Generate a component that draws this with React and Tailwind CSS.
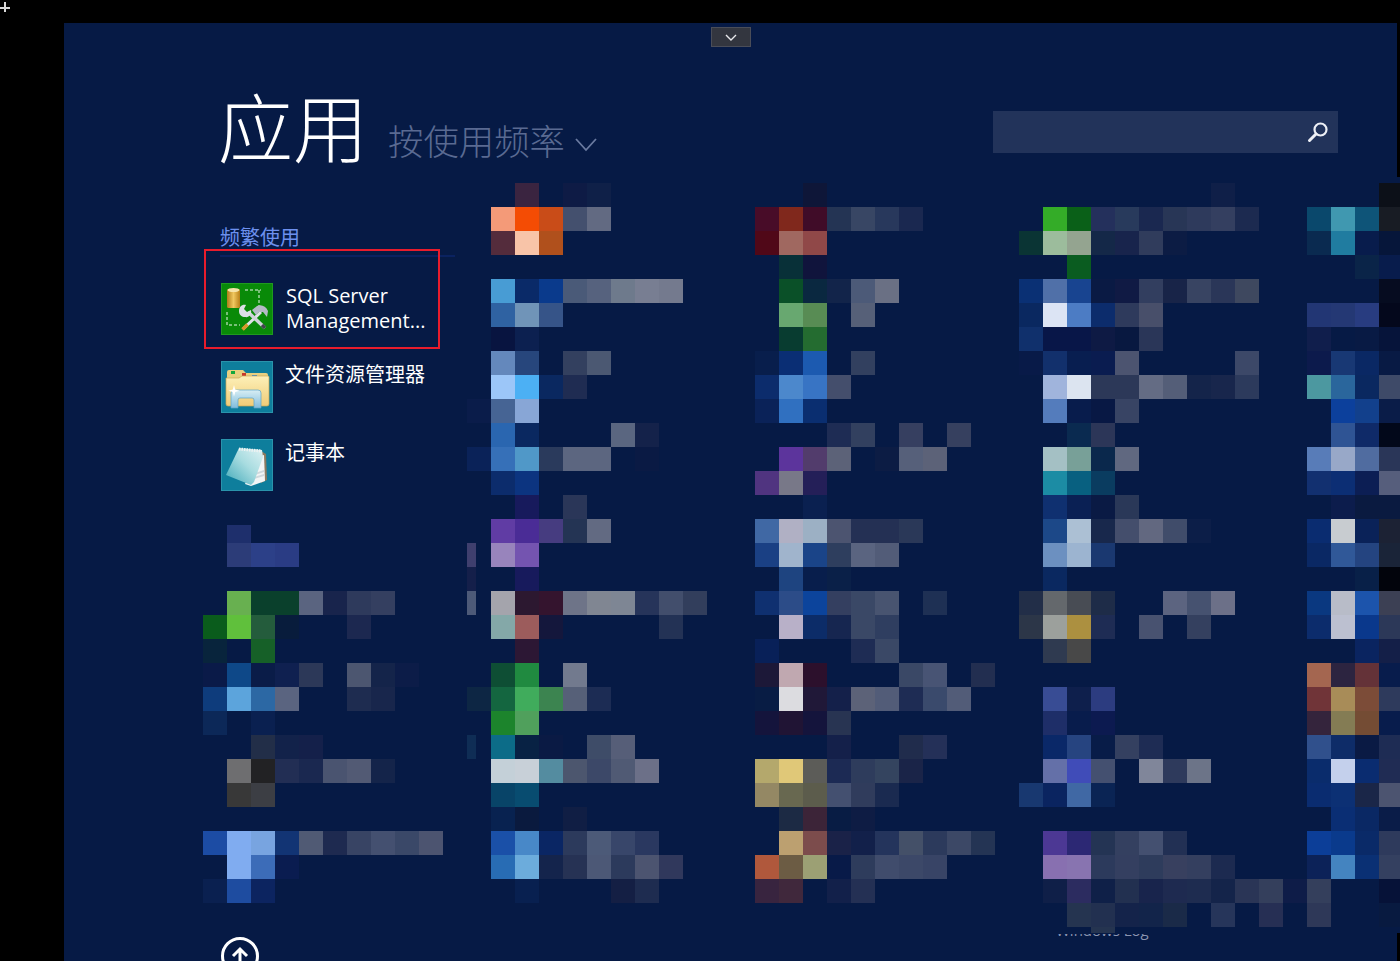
import React from "react";

// mosaic rows, one string per row: "col:hex col:hex ..."
const mosaic = [
  "13:3a2440 15:0e1b45 16:0f2048 25:0e1638 42:0f1f48 49:0c1018",
  "12:f49a78 13:f44c04 14:c94c18 15:44506e 16:626a82 23:480c28 24:80281c 25:400c28 26:243454 27:384664 28:28385c 29:1a2850 35:34ac28 36:0a6018 37:24305c 38:283a5c 39:1a2850 40:283656 41:2e3a5c 42:343f60 43:1c2a50 46:0a486c 47:4098b0 48:0e5478 49:181c24",
  "12:542c3c 13:f8c4a8 14:b0501c 23:500818 24:a06860 25:904848 34:0a3434 35:9cbc9c 36:94a490 37:142848 38:18244c 39:303c5c 40:0c1c44 46:0a2a50 47:207ca0 48:081c4c 49:06163a",
  "24:083038 25:10143c 36:0a5c20 48:0a2448 49:081c4c",
  "12:489cd4 13:0a2a68 14:0a3a8c 15:4a5a78 16:56627e 17:6e7a8c 18:787e92 19:747a8e 24:0a5028 25:0a2840 26:12244a 27:4c5a78 28:6a7084 34:0a3074 35:5070a8 36:184490 37:0a1a44 38:101a44 39:323e5f 40:182448 41:384462 42:2a3658 43:3e485f 49:060c20",
  "12:2f62a2 13:7094b8 14:365488 24:68a870 25:588c54 27:566078 34:0a2860 35:dce4f4 36:4c7cc4 37:0c2c6c 38:2e3a5c 39:484f6a 46:223674 47:243874 48:283c80 49:04081c",
  "12:081440 13:0c2050 24:083c30 25:246c30 34:10306c 35:081648 36:081648 37:0e1a44 38:081840 39:2a3658 46:101e4c 48:081a44 49:06143a",
  "12:6488bc 13:27467c 15:33405f 16:4b5872 23:081e4c 24:0a2e74 25:1c5ab0 27:32405f 34:081a48 35:12306c 36:081e50 37:0a1c50 38:4c5470 43:3c4868 46:0c1a4c 47:183874 48:0a2864 49:081a44",
  "12:9cc6f8 13:4cb0f4 14:0a2860 15:1f2c52 23:0c2c6c 24:4c88cc 25:3874c4 26:444e6c 35:a0b4dc 36:dce4f0 37:2c3858 38:2c3858 39:646c84 40:545e78 41:14244a 42:18264c 43:2c3a5c 46:4c98a0 47:2a669c 48:0a2860 49:3e4a68",
  "11:0a1c4a 12:466494 13:88a6d6 23:0a2258 24:3070c0 25:0a2e70 35:547cbc 36:081c4c 37:081844 38:384464 47:0c409c 48:12408c 49:0a1c48",
  "12:2a66b0 13:0a2860 17:5a6680 18:14224a 26:1e2c54 27:32405f 29:363f60 31:36405f 36:0a2a50 37:2c3658 47:2f5494 48:0f2a68 49:02081a",
  "11:0a2258 12:3670b8 13:5098c8 14:2a3a5c 15:5c6680 16:5c6680 18:0a1a44 24:5c349c 25:523c6c 26:5c6278 28:0c1c44 29:56607a 30:5c6278 35:a4c0c4 36:78a098 37:0a284c 38:606880 46:587cb8 47:98a8c8 48:506ca0 49:2a3658",
  "12:0c2c6c 13:0c3480 23:503480 24:787888 25:241f58 35:1c8ca4 36:086080 37:0a3c60 46:123070 47:0c2e74 48:0c1e54 49:565e7c",
  "13:171a5c 15:2a3658 25:0a2050 35:0f3070 36:0a2054 37:0a1a44 38:2a3858 47:0c1c4c 48:0a1a40 49:0a1a40",
  "12:603ca4 13:4a2c96 14:463c80 15:243454 16:626a82 23:4068a4 24:b0b0c4 25:9cb0c4 26:4c5470 27:243054 28:243054 29:2a3858 35:1c4888 36:acc0d4 37:18284c 38:444e6c 39:626880 40:404c6a 41:0c1e48 46:0a2c70 47:c8ccd0 48:0a2258 49:1c2234",
  "1:2c3c78 2:2c4088 3:2a3c84 12:9884bc 13:7454b0 23:1a4084 24:a0b4cc 25:1a4488 26:2e3e5e 27:5a6480 28:525c78 35:6c90c0 36:9cb4d0 37:1a3870 46:0a2864 47:305898 48:244480 49:1a2438",
  "13:171a5c 24:1e4480 25:081e4c 26:0a2048 35:0a2860 48:082048 49:02040c",
  "1:68b050 2:0a402c 3:0a402c 4:5a6480 5:18244c 6:2e3a5c 7:343f60 12:a4a4ac 13:2c1830 14:34142e 15:6e7488 16:808692 17:7e8694 18:26345a 19:424e6c 20:323e5c 23:0f3070 24:2c4c88 25:0c449c 26:343f60 27:3a4866 28:485470 30:1e3054 34:222e48 35:64686c 36:484c54 37:1e2c48 40:5c6480 41:465270 42:6c7088 46:0a3880 47:b8bcc8 48:1c54ac 49:3c4054",
  "0:0a5c1c 1:60c03c 2:245c3c 3:081c3c 6:1c2850 12:84a8a8 13:9c5c5c 14:14173c 19:233255 24:b8b0c8 25:0c2c68 26:162650 27:3a4866 28:2f3e60 34:2c3648 35:9ca09c 36:ac9040 37:1e2c54 39:485270 41:34405f 46:0c2c6c 47:bcc0d0 48:0a388c 49:2c3858",
  "0:08243c 2:166028 13:2c1734 23:082058 27:1e2c54 28:3a4866 35:2f3a50 36:484848 48:0a2460 49:141f48",
  "0:0a1a48 1:0e4888 2:0a1c48 3:0f2050 4:2c3858 6:4c5670 7:14244a 8:0c1c48 12:0e4e34 13:208a40 15:727a8e 23:1c1838 24:c0a8b0 25:2c102c 29:3a4866 30:485474 32:222e50 46:a46650 47:2c2440 48:643238 49:081c4c",
  "0:0e3c7c 1:5ca4dc 2:2c68a4 3:5a6480 6:1e2c50 7:18264c 11:0d2644 12:146640 13:40ac5c 14:3c8450 15:566078 16:1c2c54 23:081c44 24:dcdce0 25:201838 26:14204a 27:5c6278 28:525c78 29:1e2c54 30:3a4a6c 31:525c78 35:384c94 36:0e1f4c 37:2c3c80 46:703438 47:a88c58 48:7c4c38 49:2e3a5c",
  "0:0c2858 2:0a2050 12:1c842c 13:50a05c 23:14143c 24:201434 25:14143c 26:283452 35:1e2e68 36:081c4c 37:0c1a50 46:34243c 47:847c54 48:744c34 49:081c4c",
  "2:222e48 3:12224a 4:14204a 12:0c6c88 13:082244 14:0a1a44 16:3e4c68 17:565e78 26:14204a 29:202c4c 30:243058 35:0a2868 36:264480 37:081c48 38:344060 39:1e2c54 46:30508c 47:0e2c68 48:0a1a44 49:1e2c54",
  "1:6e6e70 2:222224 3:222e54 4:1a2850 5:4a5470 6:525a74 7:14244a 12:c4d0d8 13:c8d0d8 14:548ca0 15:4c566e 16:3c4868 17:505a74 18:6c7088 23:b4a86c 24:e0c878 25:5c5c58 26:1c2a54 27:2e3c5c 28:34445f 29:1a2448 35:6470a8 36:404cb8 37:445070 39:80869a 40:2e3a5c 41:6c7488 46:0a2c6c 47:c4d0ec 48:0a2c70 49:202c54",
  "1:383838 2:3c3e44 12:084468 13:084c70 23:948864 24:686850 25:5c5c4c 26:445070 27:303c5c 28:1a2a50 34:183870 35:0a2460 36:4068a4 37:0a2454 46:0a2c70 47:0c3074 48:1a2648 49:4c5470",
  "12:082250 13:0a1a3e 15:101e44 24:1c2a44 25:3c2438 26:081c44 27:0e1c44 47:0a2e74 48:0a2864 49:0a1c48",
  "0:1c4ca4 1:80acf0 2:78a4e0 3:123474 4:505a74 5:1e2a50 6:384464 7:445070 8:3a4868 9:4c5470 12:1a50a8 13:4888c8 14:0a2664 15:2c3a5c 16:4c5a78 17:38466a 18:2a3860 24:bca070 25:7c4c4c 26:1a2248 27:12204a 28:24345c 29:445068 30:2c3a5c 31:3c4866 32:243454 35:4c3894 36:2c2874 37:243454 38:344060 39:445070 40:223054 46:0c3e98 47:0a3a8c 48:0a2a68 49:2e3a5c",
  "1:80acf0 2:3c6cb8 3:0a1c50 12:286cb4 13:6cacdc 14:14244c 15:263254 16:4c5876 17:2c3a5c 18:4c5470 19:30385c 23:b0583c 24:6c5c44 25:9ca074 26:081a48 27:2e3c5c 28:404c6c 29:3c4868 30:384466 35:8870b0 36:8874b0 37:2c3a5c 38:343f60 39:2e3c5c 40:38405f 41:343f5f 42:1c2a50 46:0c2258 47:4484c0 48:0a3074 49:344060",
  "0:0a2050 1:1e4ca0 2:0c2460 13:082050 17:141f44 18:1e2c50 23:38243f 24:40283c 26:12204a 27:243054 35:0f1f48 36:2c2c60 37:0f2048 38:223050 39:18244c 40:1e2a50 41:1e2c50 42:14244a 43:2a3556 44:343f5c 45:0e1c48 46:343f5c 49:061238",
  "36:253450 37:223050 38:14234a 39:12244a 40:1a2a48 42:26355a 44:262f54 46:2e3858 49:081a40",
];

const cells = mosaic.flatMap((row, r) =>
  row.split(" ").map((cell) => {
    const [c, hex] = cell.split(":");
    return { r: r + 1, c: Number(c) + 1, hex };
  })
);

const SqlIcon = () => (
  <svg width="52" height="52" viewBox="0 0 52 52" className="shrink-0">
    <defs>
      <linearGradient id="can" x1="0" x2="1" y1="0" y2="0">
        <stop offset="0" stopColor="#b07c18" />
        <stop offset="0.5" stopColor="#f0c860" />
        <stop offset="1" stopColor="#b88018" />
      </linearGradient>
    </defs>
    <rect x="0.5" y="0.5" width="51" height="51" fill="#098a08" stroke="#1f9a1f" />
    <rect x="6" y="6" width="13" height="19" rx="1.5" fill="url(#can)" />
    <ellipse cx="12.5" cy="7" rx="6" ry="2" fill="#f6e4a8" />
    <path d="M24 7h16M38 7v17M6 29v13h13" stroke="#78c078" strokeWidth="2" strokeDasharray="3 2" fill="none" />
    {/* hammer */}
    <path d="M22 46L40 29" stroke="#dfe2e6" strokeWidth="3" />
    <path d="M21.5 46.5l5-5" stroke="#d8982c" strokeWidth="3.5" />
    <path d="M31 27l5-4c4-2 9 0 11 5l-1 6-4-5-4 0-3 3z" fill="#b4bac6" />
    {/* wrench */}
    <path d="M27 29L44 45" stroke="#cfd3da" strokeWidth="3.5" />
    <path d="M44 45l-3-3" stroke="#40464c" strokeWidth="3.5" />
    <path d="M18 28c0-4 3-7 7-6l-2 4 3 3 4-2c1 4-2 8-6 7-3 0-6-2-6-6z" fill="#dde0e6" />
  </svg>
);

const FolderIcon = () => (
  <svg width="52" height="52" viewBox="0 0 52 52" className="shrink-0">
    <defs>
      <linearGradient id="fold" x1="0" x2="0" y1="0" y2="1">
        <stop offset="0" stopColor="#fdf0b8" />
        <stop offset="1" stopColor="#f0cc78" />
      </linearGradient>
      <linearGradient id="glass" x1="0" x2="0" y1="0" y2="1">
        <stop offset="0" stopColor="#d8eef4" />
        <stop offset="1" stopColor="#80bcdc" />
      </linearGradient>
    </defs>
    <rect x="0.5" y="0.5" width="51" height="51" fill="#0e7e9c" stroke="#2a93ab" />
    <path d="M6 11q0-2 2-2h14l3 3h20q2 0 2 2v8H6z" fill="#e8d080" />
    <rect x="10" y="10" width="4" height="3" fill="#12a83c" />
    <rect x="21" y="12" width="4" height="3" fill="#c8382c" />
    <rect x="31" y="14" width="5" height="3" fill="#3088d8" />
    <path d="M5 17h13l3-2h26q1 0 1 1v27q0 2-2 2H7q-2 0-2-2z" fill="url(#fold)" stroke="#c8a858" strokeWidth="0.7" />
    <path d="M10 32q0-3 3-3h24q3 0 3 3v15h-7v-8q0-2-2-2H19q-2 0-2 2v8h-7z" fill="url(#glass)" stroke="#5aa4c8" strokeWidth="0.7" />
    <path d="M13 24l1.2 4.5 4.5 1.2-4.5 1.2-1.2 4.5-1.2-4.5-4.5-1.2 4.5-1.2z" fill="#ffffff" />
  </svg>
);

const NotepadIcon = () => (
  <svg width="52" height="52" viewBox="0 0 52 52" className="shrink-0">
    <defs>
      <linearGradient id="page" x1="0" x2="1" y1="1" y2="0">
        <stop offset="0" stopColor="#3fa8b8" />
        <stop offset="0.55" stopColor="#a8dce0" />
        <stop offset="1" stopColor="#dff2f4" />
      </linearGradient>
    </defs>
    <rect x="0.5" y="0.5" width="51" height="51" fill="#0e7e9c" stroke="#2a93ab" />
    <path d="M40 12l5 3 1 26-6 3z" fill="#8c7a60" />
    <path d="M36 18l7-2 1 26-14 5-6-2z" fill="#f2f5f5" />
    <path d="M34 34l9-3 0 2-9 3zM33 38l10-3 0 2-10 3z" fill="#cfd8dc" />
    <path d="M18 9l23 2 1 7-9 25-3 3L5 36z" fill="url(#page)" />
    <path d="M18 10l22 2" stroke="#eef2f2" strokeWidth="3" strokeDasharray="1.5 1" />
  </svg>
);

const Tile = ({ icon, children, className }) => (
  <div className="flex gap-[13px]">
    {icon}
    <div className={`text-[20px] leading-[25px] text-white ${className}`}>{children}</div>
  </div>
);

export default function App() {
  return (
    <div className="relative h-[961px] w-[1400px] overflow-hidden bg-black pt-[23px] pl-[64px] font-['Open_Sans','Noto_Sans_CJK_SC',sans-serif]">
      <div className="relative h-[938px] overflow-hidden bg-[#061a45]">
        {/* handle that pulls the charms bar down */}
        <div className="absolute left-[647px] top-[4px] flex h-[20px] w-[40px] items-center justify-center border border-[#4a4d58] bg-[#33363f]">
          <svg width="12" height="7" viewBox="0 0 12 7" fill="none" stroke="#e8e8ec" strokeWidth="1.4">
            <path d="M1 1l5 5 5-5" />
          </svg>
        </div>

        {/* header */}
        <div className="flex h-[160px] pl-[154px] pr-[62px]">
          <h1 className="mt-[60px] h-[90px] text-[75px] font-light leading-[90px] text-white">应用</h1>
          <div className="mt-[94px] ml-[20px] flex h-[50px] items-center text-[35.4px] font-light text-[#5a6a92]">
            按使用频率
            <svg width="22" height="14" viewBox="0 0 22 14" fill="none" stroke="#6a7aa0" strokeWidth="1.8" className="ml-[10px] mt-[6px]">
              <path d="M1 1l10 11L21 1" />
            </svg>
          </div>
          <div className="ml-auto mt-[88px] flex h-[42px] w-[345px] items-center justify-end bg-[#22335a] pr-[9px]">
            <svg width="22" height="22" viewBox="0 0 22 22" fill="none">
              <circle cx="13.5" cy="8.5" r="6" stroke="#eef0f6" strokeWidth="2.2" />
              <path d="M9 13l-6.5 6.5" stroke="#eef0f6" strokeWidth="3" strokeLinecap="round" />
            </svg>
          </div>
        </div>

        {/* tile grid, blurred app names included */}
        <div className="ml-[139px] grid grid-cols-[repeat(50,24px)] grid-rows-[repeat(31,24px)_6px]">
          <div className="relative col-start-1 col-end-12 row-start-1 row-end-15 pl-[1px] pt-[42px]">
            <div className="absolute left-[17px] top-[72px] h-[2px] w-[235px] bg-[#0a2260]" />
            <p className="ml-[16px] h-[24px] pt-[1px] text-[20px] leading-[24px] text-[#6d90ee]">频繁使用</p>
            <div className="relative h-[100px] w-[236px] border-2 border-[#e81c2c] pl-[15px] pt-[32px]">
              <Tile icon={<SqlIcon />}>
                SQL Server
                <br />
                Management...
              </Tile>
            </div>
            <div className="ml-[17px] mt-[12px] flex flex-col gap-[26px] [&>div]:gap-[12px]">
              <Tile icon={<FolderIcon />} className="pt-[1px] text-[19.7px]">文件资源管理器</Tile>
              <Tile icon={<NotepadIcon />} className="pt-[1px]">记事本</Tile>
            </div>
          </div>

          {cells.map(({ r, c, hex }) => (
            <div key={`${r}-${c}`} style={{ gridRow: r, gridColumn: c, backgroundColor: `#${hex}` }} />
          ))}

          <div className="col-start-2 row-start-15 h-[18px] self-end bg-[#1e2f6c]" />
          <div className="col-start-12 row-start-16 w-[9px] bg-[#3f3f6e]" />
          <div className="col-start-12 row-start-17 w-[9px] bg-[#141f4a]" />
          <div className="col-start-12 row-start-18 w-[9px] bg-[#4d5a78]" />
          <div className="col-start-12 row-start-24 w-[9px] bg-[#0f2d55]" />
          <div className="col-start-38 row-start-32 bg-[#253450]" />
        </div>

        {/* footer */}
        <div className="flex pl-[157px] pt-[4px]">
          <div className="flex h-[38px] w-[38px] shrink-0 items-center justify-center rounded-full border-[3px] border-white">
            <svg width="18" height="20" viewBox="0 0 18 20" fill="none" stroke="#ffffff" strokeWidth="3">
              <path d="M9 20V3M2 10l7-7 7 7" />
            </svg>
          </div>
          <div className="-mt-[3px] ml-[797px] flex h-[6px] items-end overflow-hidden text-[15px] leading-[20px] text-[#8a94b0]">
            Windows Log
          </div>
        </div>
      </div>

      {/* monitor edge on the right */}
      <div className="absolute right-0 top-0 h-[177px] w-[3px] bg-black" />
      <div className="absolute bottom-0 right-0 h-[28px] w-[3px] bg-black" />

      {/* cursor cross */}
      <div className="absolute left-0 top-[7px] h-[1.5px] w-[10px] bg-[#d8d8d8]" />
      <div className="absolute left-[4px] top-[2px] h-[10px] w-[1.5px] bg-[#d8d8d8]" />
    </div>
  );
}
